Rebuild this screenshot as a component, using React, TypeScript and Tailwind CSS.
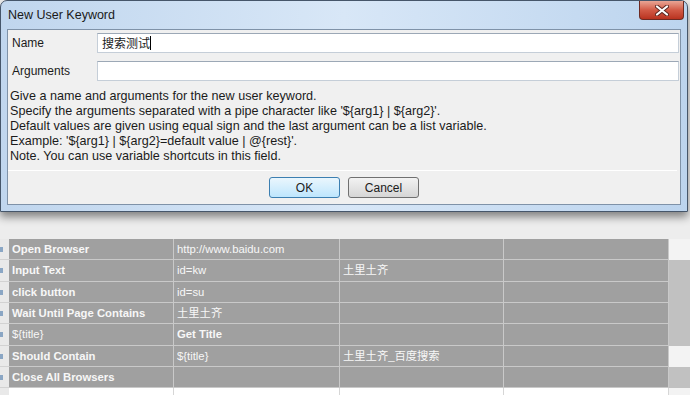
const rows = [
  { h: 'h-[21px]', side: 'bg-[#f3f3f3]', c: [{ t: 'Open Browser', b: true }, { t: 'http://www.baidu.com' }, { t: '' }, { t: '' }] },
  { h: 'h-[22px]', side: 'bg-[#c1c1c1]', c: [{ t: 'Input Text', b: true }, { t: 'id=kw' }, { t: '土里土齐' }, { t: '' }] },
  { h: 'h-[21px]', side: 'bg-[#c1c1c1]', c: [{ t: 'click button', b: true }, { t: 'id=su' }, { t: '' }, { t: '' }] },
  { h: 'h-[21px]', side: 'bg-[#c1c1c1]', c: [{ t: 'Wait Until Page Contains', b: true }, { t: '土里土齐' }, { t: '' }, { t: '' }] },
  { h: 'h-[22px]', side: 'bg-[#c1c1c1]', c: [{ t: '${title}' }, { t: 'Get Title', b: true }, { t: '' }, { t: '' }] },
  { h: 'h-[21px]', side: 'bg-[#f3f3f3]', c: [{ t: 'Should Contain', b: true }, { t: '${title}' }, { t: '土里土齐_百度搜索' }, { t: '' }] },
  { h: 'h-[21px]', side: 'bg-[#c1c1c1]', c: [{ t: 'Close All Browsers', b: true }, { t: '' }, { t: '' }, { t: '' }] },
];

const widths = ['w-[165px]', 'w-[166px]', 'w-[164px]', 'w-[165px]'];

function TextBox({ children }: { children?: React.ReactNode }) {
  return (
    <div className="flex-1 h-[20px] mr-[1px] bg-white border border-[#c5ced8] border-t-[#9ca8b6] flex items-center pl-[4px]">
      {children}
    </div>
  );
}

export default function App() {
  return (
    <div className="w-[690px] h-[395px] overflow-hidden bg-[#ededed] font-['Liberation_Sans','Noto_Sans_CJK_SC',sans-serif]">
      {/* dialog */}
      <div className="w-[688px] h-[212px] rounded-t-[7px] border border-[#46566a] bg-gradient-to-r from-[#c0d6ee] via-[#d8e7f7] to-[#bcd4ee] shadow-[0_5px_9px_rgba(0,0,0,0.45)] flex flex-col">
        <div className="h-[28px] flex items-start justify-between">
          <span className="pl-[7px] pt-[7px] text-[12.5px] leading-[14px] text-[#1a1a1a]">New User Keyword</span>
          <div className="mr-[3px] w-[45px] h-[19px] rounded-b-[4px] border border-t-0 border-[#6d2a22] bg-gradient-to-b from-[#e8a595] via-[#d25a46] to-[#b9321f] flex items-center justify-center">
            <svg width="14" height="11" viewBox="0 0 14 11">
              <path d="M2 1.5 L12 9.5 M12 1.5 L2 9.5" stroke="#5a2620" strokeWidth="4" strokeLinecap="round" />
              <path d="M2 1.5 L12 9.5 M12 1.5 L2 9.5" stroke="#ffffff" strokeWidth="2.2" strokeLinecap="round" />
            </svg>
          </div>
        </div>
        <div className="mx-[6px] mb-[6px] flex-1 border border-[#7f92a8] bg-[#f0f0f0] flex flex-col pt-[3px] text-[12px] text-[#1b1b1b]">
          <div className="flex items-center">
            <span className="w-[89px] pl-[4px]">Name</span>
            <TextBox>
              <span className="text-[12px] font-['Noto_Sans_CJK_SC',sans-serif] leading-[14px]">搜索测试</span>
              <span className="w-px h-[14px] bg-black" />
            </TextBox>
          </div>
          <div className="flex items-center mt-[8px]">
            <span className="w-[89px] pl-[4px]">Arguments</span>
            <TextBox />
          </div>
          <div className="mt-[8px] pl-[2px] leading-[15px] text-[12.6px]">
            <div>Give a name and arguments for the new user keyword.</div>
            <div>Specify the arguments separated with a pipe character like '${'{arg1}'} | ${'{arg2}'}'.</div>
            <div>Default values are given using equal sign and the last argument can be a list variable.</div>
            <div>Example: '${'{arg1}'} | ${'{arg2}'}=default value | @{'{rest}'}'.</div>
            <div>Note. You can use variable shortcuts in this field.</div>
          </div>
          <div className="mt-[6px] mr-[3px] h-px bg-[#c4c4c4] border-b border-white" />
          <div className="mt-[6px] flex justify-center gap-[8px]">
            <button className="w-[71px] h-[21px] rounded-[3px] border border-[#3c7fb1] bg-gradient-to-b from-[#eaf6fd] to-[#bee6fd] text-[12px] text-[#1b1b1b]">OK</button>
            <button className="w-[71px] h-[21px] rounded-[3px] border border-[#707070] bg-gradient-to-b from-[#f2f2f2] to-[#d6d6d6] text-[12px] text-[#1b1b1b]">Cancel</button>
          </div>
        </div>
      </div>

      {/* grid */}
      <div className="mt-[27px] flex flex-col text-[11.3px] text-[#f7f7f7]">
        {rows.map((r, i) => (
          <div key={i} className={`flex ${r.h}`}>
            <div className="w-[9px] bg-[#e9e9e9] border-b border-[#d2d2d2] flex items-center">
              <span className="w-[3px] h-[5px] bg-[#8aa6c4]" />
            </div>
            {r.c.map((c, j) => (
              <div
                key={j}
                className={`${widths[j]} bg-[#a0a0a0] border-r border-b border-[#c9c9c9] pl-[3px] flex items-center whitespace-nowrap ${c.b ? 'font-bold' : ''}`}
              >
                {c.t}
              </div>
            ))}
            <div className={`flex-1 ${r.side}`} />
          </div>
        ))}
        <div className="flex h-[10px]">
          <div className="w-[9px] bg-[#e9e9e9]" />
          {widths.map((w, j) => (
            <div key={j} className={`${w} bg-white border-r border-[#d6d6d6]`} />
          ))}
          <div className="flex-1 bg-[#f3f3f3]" />
        </div>
      </div>
    </div>
  );
}
